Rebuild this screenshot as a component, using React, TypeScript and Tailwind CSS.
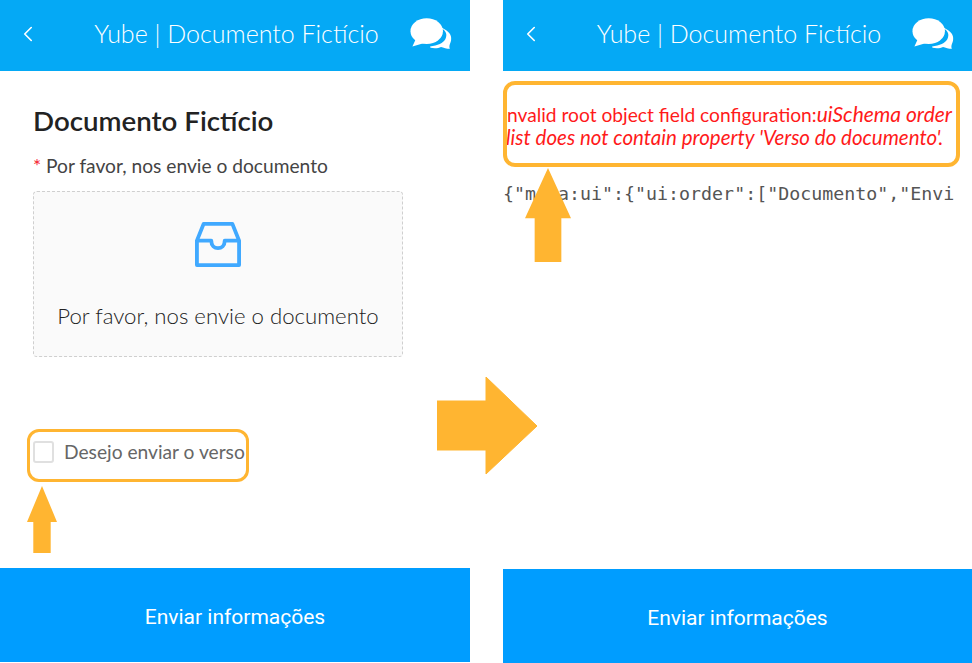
import { ChevronLeft } from "lucide-react"

const body = "font-['Lato','Open_Sans',sans-serif]"

function ChatIcon() {
  return (
    <svg width="42" height="32" viewBox="0 0 44 33" fill="#fff">
      <ellipse cx="17.5" cy="13.5" rx="17" ry="13.5" />
      <path d="M6 22 L2.5 29.5 L15 26 Z" />
      <path d="M33.5 11 C37.5 13 39.5 17 37 22 C35 26 29 28.5 21 29.5 L21.5 30.8 C26 31.8 30 31.2 32.5 30 C35 30.8 38.5 32 41.8 32 C41 30.5 41.2 28.5 41.8 27 C43.5 24 43.8 19 41.5 16 C39.5 13.5 36.5 11.5 33.5 10 Z" />
    </svg>
  )
}

function Header() {
  return (
    <header className={`flex h-[71px] items-center justify-between bg-[#05a9f5] pb-[4px] pl-[15px] pr-[18px] text-white ${body}`}>
      <ChevronLeft className="h-[26px] w-[26px]" strokeWidth={1.5} />
      <h1 className="ml-[22px] text-[25px] font-light">Yube | Documento Fictício</h1>
      <ChatIcon />
    </header>
  )
}

function Footer() {
  return (
    <button className="flex h-[94px] w-full items-center justify-center bg-[#009dff] pt-[5px] font-['Roboto',sans-serif] text-[21px] text-white">
      Enviar informações
    </button>
  )
}

function UpArrow({ className, w, h }: { className: string; w: number; h: number }) {
  return (
    <svg className={`absolute ${className}`} width={w} height={h} viewBox="0 0 100 140" preserveAspectRatio="none" fill="#ffb531">
      <path d="M50 0 L100 75 L79 75 L79 140 L21 140 L21 75 L0 75 Z" />
    </svg>
  )
}

function Drawer() {
  return (
    <svg width="46" height="46" viewBox="0 0 48 48" fill="none" stroke="#40a9ff" strokeWidth="4" strokeLinejoin="round">
      <path d="M2 20.5 L9 3 H39 L46 20.5 V46 H2 Z" />
      <path d="M2 20.5 H17 C17 31 31 31 31 20.5 H46" />
    </svg>
  )
}

export default function App() {
  return (
    <div className="relative flex h-[663px] w-[972px] overflow-hidden bg-white">
      <div className="flex h-[662px] w-[470px] flex-col">
        <Header />
        <main className={`flex flex-1 flex-col pl-[33px] pr-[67px] pt-[34px] ${body}`}>
          <h2 className="text-[27.7px] font-semibold leading-[32px] text-[#222]">Documento Fictício</h2>
          <p className="mt-[17px] text-[19.2px] leading-[24px] text-[#444]">
            <span className="text-[#f5222d]">*</span> Por favor, nos envie o documento
          </p>
          <div className="mt-[13px] flex h-[166px] flex-col items-center rounded-[4px] border border-dashed border-[#cfcfcf] bg-[#fafafa] pt-[29px]">
            <Drawer />
            <span className="mt-[35px] text-[22.2px] font-light leading-[28px] text-[#222]">Por favor, nos envie o documento</span>
          </div>
          <label className="mt-[83px] flex items-center">
            <span className="h-[22px] w-[21px] rounded-[3px] border-2 border-[#e0e0e0] bg-white" />
            <span className="ml-[10px] text-[19.2px] leading-[24px] text-[#666]">Desejo enviar o verso</span>
          </label>
        </main>
        <Footer />
      </div>
      <div className="w-[33px]" />
      <div className="flex h-[663px] flex-1 flex-col">
        <Header />
        <main className="flex flex-1 flex-col pt-[31px]">
          <p className={`whitespace-nowrap text-[20.5px] leading-[23px] text-[#ff1a1a] ${body}`}>
            <span className="ml-[4px] text-[19.2px]">nvalid root object field configuration:</span>
            <em className="text-[21px]">uiSchema order</em>
            <br />
            <em className="ml-[3px]">list does not contain property 'Verso do documento'.</em>
          </p>
          <pre className="mt-[33px] overflow-hidden font-['DejaVu_Sans_Mono',monospace] text-[18.3px] leading-[24px] text-[#555]">{'{"meta:ui":{"ui:order":["Documento","Envi'}</pre>
        </main>
        <Footer />
      </div>
      <div className="absolute left-[27px] top-[429px] h-[53px] w-[222px] rounded-[12px] border-[3px] border-[#ffb531]" />
      <div className="absolute left-[503px] top-[81px] h-[86px] w-[457px] rounded-[12px] border-[4px] border-[#ffb531]" />
      <UpArrow className="left-[27px] top-[486px]" w={30} h={67} />
      <UpArrow className="left-[525px] top-[168px]" w={46} h={94} />
      <svg className="absolute left-[437px] top-[377px]" width="101" height="98" viewBox="0 0 101 98" fill="#ffb531">
        <path d="M0 24 H49 V0 L100 49 L49 97 V73 H0 Z" stroke="#ffb531" strokeLinejoin="round" />
      </svg>
    </div>
  )
}
